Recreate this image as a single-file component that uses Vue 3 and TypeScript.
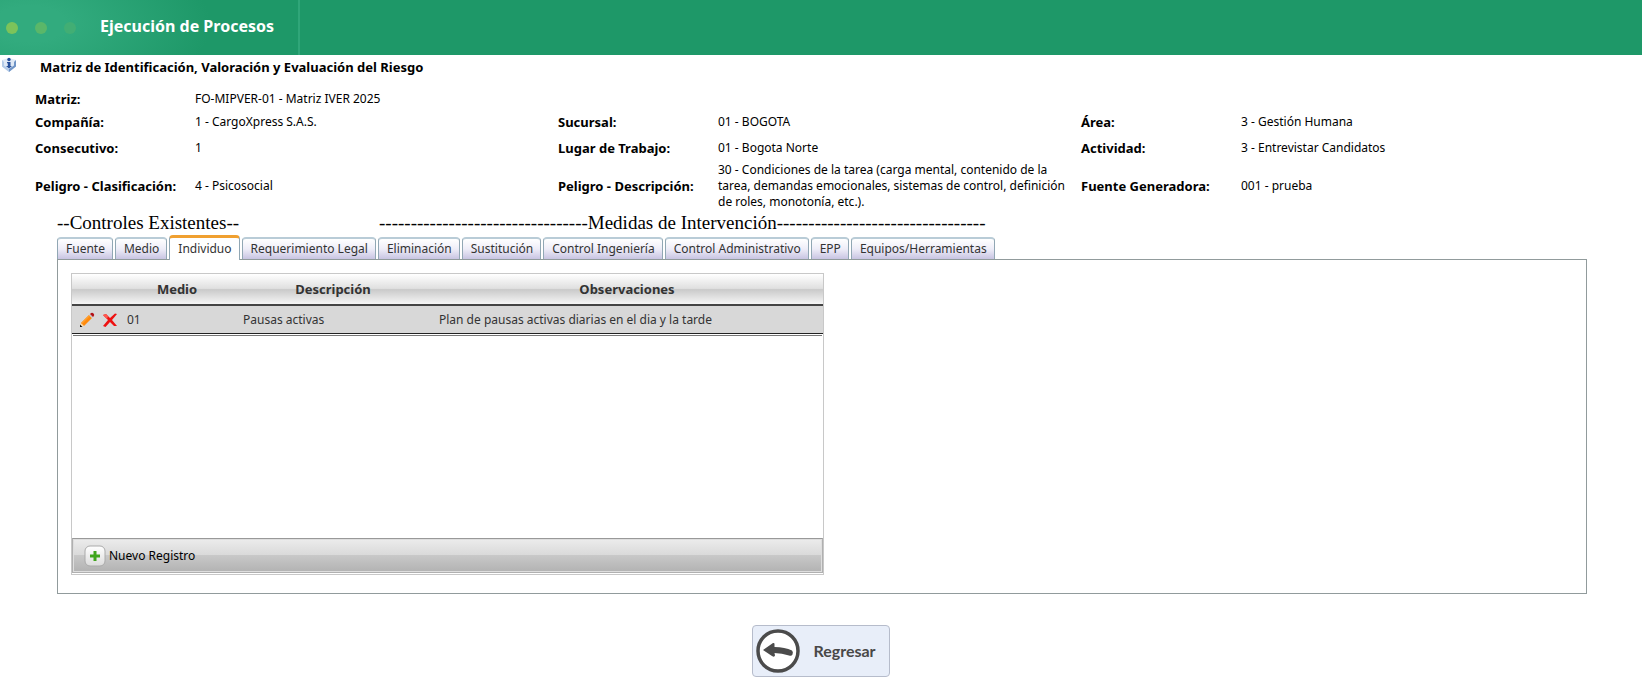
<script setup lang="ts">
import { ref } from 'vue'

interface Field {
  label: string
  value: string
  wide?: boolean
}

const fields: Field[] = [
  { label: 'Matriz:', value: 'FO-MIPVER-01 - Matriz IVER 2025', wide: true },
  { label: 'Compañía:', value: '1 - CargoXpress S.A.S.' },
  { label: 'Sucursal:', value: '01 - BOGOTA' },
  { label: 'Área:', value: '3 - Gestión Humana' },
  { label: 'Consecutivo:', value: '1' },
  { label: 'Lugar de Trabajo:', value: '01 - Bogota Norte' },
  { label: 'Actividad:', value: '3 - Entrevistar Candidatos' },
  { label: 'Peligro - Clasificación:', value: '4 - Psicosocial' },
  {
    label: 'Peligro - Descripción:',
    value:
      '30 - Condiciones de la tarea (carga mental, contenido de la tarea, demandas emocionales, sistemas de control, definición de roles, monotonía, etc.).',
  },
  { label: 'Fuente Generadora:', value: '001 - prueba' },
]

const tabs: string[] = [
  'Fuente',
  'Medio',
  'Individuo',
  'Requerimiento Legal',
  'Eliminación',
  'Sustitución',
  'Control Ingeniería',
  'Control Administrativo',
  'EPP',
  'Equipos/Herramientas',
]
const active = ref('Individuo')

const rows = [
  { medio: '01', descripcion: 'Pausas activas', observaciones: 'Plan de pausas activas diarias en el dia y la tarde' },
]
const dashes = '-'.repeat(33)
</script>

<template>
  <div class="page">
    <header class="banner">
      <div class="brand">
        <span class="dot d1"></span>
        <span class="dot d2"></span>
        <span class="dot d3"></span>
        <span class="brand-title">Ejecución de Procesos</span>
      </div>
    </header>

    <div class="heading">
      <svg class="info" width="16" height="16" viewBox="0 0 16 16" aria-hidden="true">
        <path d="M1 3 L8 1 L15 3 V9.500 L8 15 L1 9.500 Z" fill="#dfe9f6" />
        <path d="M1 3 V9.500 L8 15 V12 L3 8.500 V5 Z" fill="#b4cbe8" />
        <path d="M15 3 V9.500 L8 15 V12 L13 8.500 V5 Z" fill="#6f94c6" />
        <circle cx="8" cy="2.500" r="1.700" fill="#27509b" />
        <path d="M6 5 H9.500 V9 H11 L8 11.500 L5 9 H6.800 V6.200 H6 Z" fill="#27509b" />
      </svg>
      <h1>Matriz de Identificación, Valoración y Evaluación del Riesgo</h1>
    </div>

    <dl class="fields">
      <div v-for="f in fields" :key="f.label" class="field" :class="{ wide: f.wide }">
        <dt>{{ f.label }}</dt>
        <dd>{{ f.value }}</dd>
      </div>
    </dl>

    <main class="content">
      <div class="groups">
        <span class="group-a">--Controles Existentes--</span>
        <span>{{ dashes }}Medidas de Intervención{{ dashes }}</span>
      </div>

      <div class="tabs" role="tablist">
        <button
          v-for="t in tabs"
          :key="t"
          type="button"
          role="tab"
          class="tab"
          :class="{ active: t === active }"
          :aria-selected="t === active"
          @click="active = t"
        >
          {{ t }}
        </button>
      </div>

      <section class="panel">
        <div class="grid">
          <table>
            <colgroup>
              <col class="c-actions" />
              <col class="c-medio" />
              <col class="c-desc" />
              <col />
            </colgroup>
            <thead>
              <tr>
                <th></th>
                <th>Medio</th>
                <th>Descripción</th>
                <th>Observaciones</th>
              </tr>
            </thead>
            <tbody>
              <tr v-for="r in rows" :key="r.medio">
                <td class="actions">
                  <div class="action-list">
                    <button type="button" class="icon-btn" aria-label="Editar">
                      <svg width="16" height="16" viewBox="0 0 16 16">
                        <path d="M1 15 L2 11 L5 14 Z" fill="#ffe0ac" />
                        <path d="M2 11 L10 3 L13 6 L5 14 Z" fill="#ff8a0c" />
                        <path d="M2 11 L10 3 L11 4 L3 12 Z" fill="#ffa030" />
                        <path d="M10 3 L11 2 L14 5 L13 6 Z" fill="#c9c9c9" />
                        <path d="M11 2 Q13 0 14.500 1.500 Q16 3 14 5 Z" fill="#b31217" />
                        <path d="M1 12.500 V15 H3.500 Z" fill="#111" />
                      </svg>
                    </button>
                    <button type="button" class="icon-btn" aria-label="Eliminar">
                      <svg width="16" height="16" viewBox="0 0 16 16">
                        <path d="M1 3 L4 2 L8 6 L13 1.500 L15 2 L10 8 L15 14 L12 14 L8 10 L3.500 15 L1 14 L6 8 Z" fill="#ee1111" />
                        <path d="M1 3 L4 2 L6 4.500 L5 7 Z" fill="#ff5a50" />
                      </svg>
                    </button>
                  </div>
                </td>
                <td>{{ r.medio }}</td>
                <td>{{ r.descripcion }}</td>
                <td>{{ r.observaciones }}</td>
              </tr>
            </tbody>
          </table>
          <div class="grid-space"></div>
          <div class="grid-footer">
            <button type="button" class="new-btn">
              <svg width="22" height="22" viewBox="0 0 22 22" aria-hidden="true">
                <defs>
                  <linearGradient id="plusFace" x1="0" y1="0" x2="0" y2="1">
                    <stop offset="0" stop-color="#fff" />
                    <stop offset="1" stop-color="#dcdcdc" />
                  </linearGradient>
                </defs>
                <rect x="1" y="1" width="20" height="20" rx="5" fill="url(#plusFace)" stroke="#aaa" />
                <path d="M9.500 6 H12.500 V9.500 H16 V12.500 H12.500 V16 H9.500 V12.500 H6 V9.500 H9.500 Z" fill="#3fa51c" />
              </svg>
              Nuevo Registro
            </button>
          </div>
        </div>
      </section>
    </main>

    <div class="back-row">
      <button type="button" class="back">
        <svg width="44" height="44" viewBox="0 0 44 44" aria-hidden="true">
          <circle cx="22" cy="22" r="20" fill="#fff" stroke="#4b4b4b" stroke-width="3.500" />
          <path
            d="M7 21 L17 14 Q19 13.500 18.500 16 L18.500 18 Q29 18 36 21.500 Q37.500 23 36.500 25.500 Q35.500 27.500 33 26.500 Q26 24 18.500 24 L19 26.500 Q18.500 28.500 16 27 Z"
            fill="#4b4b4b"
          />
        </svg>
        <span>Regresar</span>
      </button>
    </div>
  </div>
</template>

<style>
body {
  background: #fff;
}
</style>

<style scoped>
.page {
  font: 12px/16px 'Noto Sans', Tahoma, sans-serif;
  color: #000;
}
button {
  font: inherit;
  color: inherit;
  cursor: pointer;
}
.banner {
  height: 55px;
  background: #1e9868;
}
.brand {
  box-sizing: border-box;
  width: 300px;
  height: 55px;
  display: flex;
  align-items: center;
  padding-left: 6px;
  border-right: 2px solid #30a679;
  background: radial-gradient(ellipse 180px 90px at 30px 24px, #32ab7e 20%, #1e9868 100%);
}
.dot {
  width: 12px;
  height: 12px;
  margin-right: 17px;
  border-radius: 50%;
}
.d1 { background: #7cc35a; }
.d2 { background: #5ab769; }
.d3 { background: #42ae74; }
.brand-title {
  margin-left: 7px;
  padding-bottom: 4px;
  color: #fff;
  font: bold 16px/24px 'Noto Sans', sans-serif;
}
.heading {
  display: flex;
  height: 33px;
}
.info {
  margin: 2px 23px 0 1px;
  flex: none;
}
h1 {
  margin: 4px 0 0;
  font-size: 13px;
  line-height: 16px;
}
.fields {
  display: grid;
  grid-template-columns: repeat(3, 1fr);
  grid-template-rows: 22px 24px 28px auto;
  align-items: center;
  margin: 0;
  padding: 0 38px 0 35px;
}
.field {
  display: grid;
  grid-template-columns: 160px 1fr;
  align-items: center;
}
.wide {
  grid-column: 1 / -1;
}
dt {
  font-size: 13px;
  font-weight: bold;
}
dd {
  margin: 0;
  padding-right: 8px;
}
.content {
  margin: 2px 55px 0 57px;
}
.groups {
  display: flex;
  padding-bottom: 1px;
  font: 19px/22px 'Liberation Serif', serif;
  white-space: pre;
}
.group-a {
  width: 322px;
}
.tabs {
  display: flex;
  align-items: flex-end;
  gap: 2px;
  color: #333;
}
.tab {
  height: 22px;
  padding: 0 7px 0 8px;
  border: 1px solid #91a7b4;
  border-top: 2px solid #b9ccd7;
  border-bottom: 0;
  border-radius: 4px 4px 0 0;
  background: linear-gradient(#fff, #eeedf8 50%, #c8c4e2);
  line-height: 18px;
}
.tab.active {
  height: 25px;
  margin-bottom: -1px;
  border-top: 3px solid #f0a030;
  background: #fff;
  z-index: 1;
}
.panel {
  padding: 13px;
  padding-bottom: 18px;
  border: 1px solid #919b9c;
}
.grid {
  width: 50%;
  border: 1px solid #c8c8c8;
  color: #333;
}
table {
  width: 100%;
  table-layout: fixed;
  border-collapse: separate;
  border-spacing: 0;
}
.c-actions { width: 47px; }
.c-medio { width: 116px; }
.c-desc { width: 196px; }
th {
  height: 30px;
  padding: 0;
  border-bottom: 2px solid #444;
  background: linear-gradient(#fff, #e0e0e0 48%, #cacaca 52%, #f6f6f6);
  font-size: 13px;
}
td {
  height: 27px;
  padding: 0 8px;
  border-bottom: 1px solid #222;
  background: #d8d8d8;
}
.actions {
  padding: 0 0 0 7px;
}
.action-list {
  display: flex;
  gap: 7px;
}
.icon-btn {
  width: 16px;
  height: 16px;
  padding: 0;
  border: 0;
  background: none;
}
.icon-btn svg {
  display: block;
}
.grid-space {
  height: 202px;
  margin: 1px 1px 0;
  border-top: 1px solid #777;
}
.grid-footer {
  margin-bottom: 1px;
  border: 1px solid #b0b0b0;
  border-top-color: #999;
  background: linear-gradient(#ececec, #d9d9d9 50%, #c8c8c8 50%, #b2b2b2);
  box-shadow: inset 0 0 0 1px #dedede;
}
.new-btn {
  display: flex;
  align-items: center;
  gap: 3px;
  height: 33px;
  padding: 0 11px;
  border: 0;
  background: none;
  color: #000;
}
.back-row {
  display: flex;
  justify-content: center;
  padding-top: 31px;
}
.back {
  display: flex;
  align-items: center;
  gap: 13px;
  height: 52px;
  padding: 0 13px 0 3px;
  border: 1px solid #b6bccb;
  border-radius: 4px;
  background: #e8eef9;
  color: #484848;
  font: bold 16px/20px Lato, sans-serif;
}
</style>
